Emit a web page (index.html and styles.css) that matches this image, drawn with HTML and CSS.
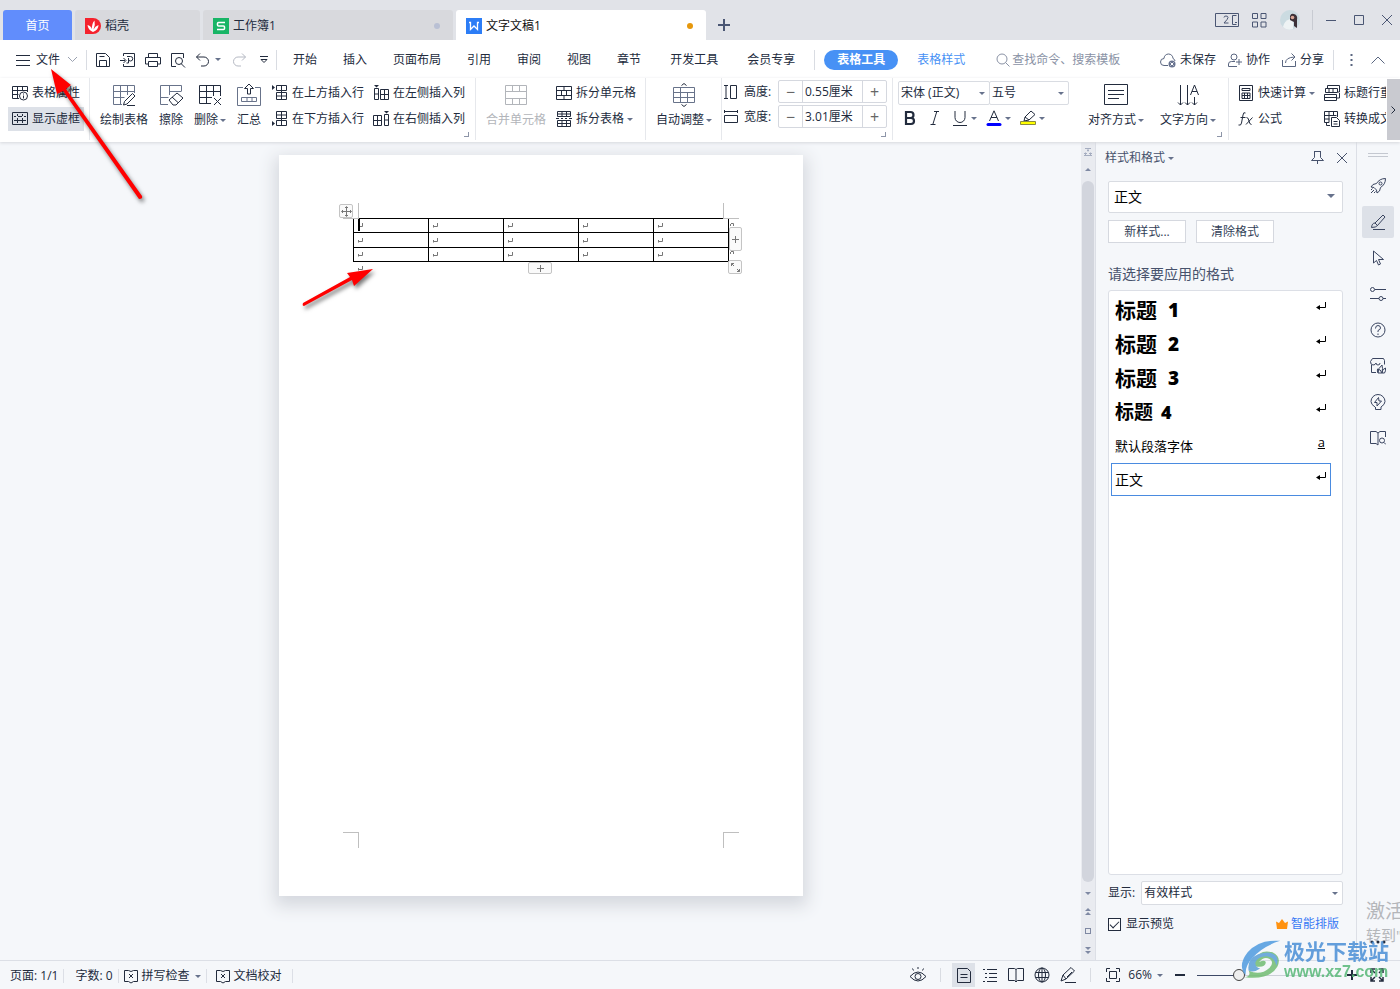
FILE: index.html
```html
<!DOCTYPE html>
<html lang="zh-CN">
<head>
<meta charset="utf-8">
<title>文字文稿1</title>
<link rel="stylesheet" href="styles.css">
</head>
<body>
<svg class="defs" aria-hidden="true">
  <symbol id="mark" viewBox="0 0 5 5"><path d="M4.500 0v3.500H.5M.5 2v2.500"/></symbol>
  <symbol id="ret" viewBox="0 0 10 8"><path d="M9.500 0v5.500H2"/><path d="M0 5.500l4-2.500v5z" fill="#000" stroke="none"/></symbol>
  <symbol id="book" viewBox="0 0 16 16"><path d="M1.500 2.500h4l2.500 1 2.500-1h4v11h-4L8 15l-2.500-1.500h-4zM6 6l4 4M10 6l-4 4"/></symbol>
  <symbol id="close" viewBox="0 0 12 12"><path d="M1 1l10 10M11 1L1 11"/></symbol>
</svg>

<header class="titlebar">
  <nav class="doc-tabs">
    <button class="doc-tab home">首页</button>
    <button class="doc-tab shell"><svg class="logo" viewBox="0 0 16 16"><path d="M0 0h8a8 8 0 0 1 0 16H0z" fill="#f5222d"/><path d="M8 14Q3 12 2.500 7q3 .5 4.500 4Q6.500 6 9.500 2.500q1 4-1 9Q10 8 13.500 7q0 5-5.500 7z" fill="#fff"/></svg>稻壳</button>
    <button class="doc-tab book"><svg class="logo" viewBox="0 0 16 16"><rect width="16" height="16" fill="#18b566"/><path d="M12 4.500H5.500a1 1 0 0 0-1 1V7a1 1 0 0 0 1 1h5a1 1 0 0 1 1 1v1.500a1 1 0 0 1-1 1H4" fill="none" stroke="#fff" stroke-width="1.500"/></svg>工作簿1<i class="dot"></i></button>
    <button class="doc-tab current"><svg class="logo" viewBox="0 0 16 16"><rect width="16" height="16" fill="#2c7df6"/><path d="M3 4.500h1.500v7L8 8l3.500 3.500v-7H13" fill="none" stroke="#fff" stroke-width="1.300"/></svg>文字文稿1<i class="dot unsaved"></i></button>
    <button class="add-tab" aria-label="新建"><svg width="12" height="12" viewBox="0 0 12 12"><path d="M6 0v12M0 6h12" stroke="#4a5673" stroke-width="2"/></svg></button>
  </nav>
  <div class="window-tools">
    <button aria-label="窗口"><svg width="24" height="14" viewBox="0 0 24 14"><path d="M.5.5h23v13H.5zM21.500 2.500h-4v9h4M20 9.500h2M9 4.500q0-1.500 2-1.500t2 1.500q0 1.500-4 5.500h4.500"/></svg></button>
    <button aria-label="应用"><svg width="15" height="15" viewBox="0 0 15 15"><path d="M.5.5h5v5h-5zM9 .5h5v5H9zM.5 9h5v5h-5zM9 9h5v5H9z"/></svg></button>
    <button class="avatar" aria-label="账户"><svg width="20" height="20" viewBox="0 0 20 20"><circle cx="10" cy="10" r="10" fill="#cbdbe1" stroke="none"/><path d="M3 17q1-6 7-8l3 3v7q-6 2-10-2z" fill="#eef3f4" stroke="none"/><path d="M10 6q1-3 4-2 4 1 3 6l0 8-3-2 0-4-4-2z" fill="#3c3138" stroke="none"/><circle cx="12.500" cy="7.500" r="1.800" fill="#d9a797" stroke="none"/></svg></button>
    <i class="divider"></i>
    <button aria-label="最小化"><svg width="12" height="12" viewBox="0 0 12 12"><path d="M1 6.500h10"/></svg></button>
    <button aria-label="最大化"><svg width="12" height="12" viewBox="0 0 12 12"><path d="M1.500 1.500h9v9h-9z"/></svg></button>
    <button aria-label="关闭"><svg width="12" height="12"><use href="#close"/></svg></button>
  </div>
</header>

<div class="menubar">
  <button class="file"><svg width="16" height="12" viewBox="0 0 16 12"><path d="M1 1.500h14M1 6.500h14M1 11.500h14"/></svg>文件<svg class="chev" width="11" height="7" viewBox="0 0 11 7"><path d="M1 1l4.500 4.500L10 1"/></svg></button>
  <i class="divider"></i>
  <div class="quick">
    <button aria-label="保存"><svg width="16" height="16" viewBox="0 0 16 16"><path d="M1.500 1.500h9l4 4v9h-13zM4.500 14V8.500h7V14M4.500 4.500h5"/></svg></button>
    <button aria-label="输出为PDF"><svg width="16" height="16" viewBox="0 0 16 16"><path d="M3.500 4V1.500h11v13h-11V12M0 8.500h5M3.500 6l2.500 2.500L3.500 11M7 4.500h3.500a2 2 0 0 1 0 4.500Q8 9 8.500 7M8.500 6v5h-2"/></svg></button>
    <button aria-label="打印"><svg width="16" height="16" viewBox="0 0 16 16"><path d="M3.500 5V1.500h9V5M3.500 12h-3V5.500h15V12h-3M3.500 9.500h9v5h-9z"/></svg></button>
    <button aria-label="打印预览"><svg width="16" height="16" viewBox="0 0 16 16"><path d="M6 14.500H1.500v-13h12V6M11 11.500l4 4"/><circle cx="9" cy="9" r="3.500"/></svg></button>
    <button class="undo" aria-label="撤销"><svg width="16" height="16" viewBox="0 0 16 16"><path d="M5 1.500L1.500 5 5 8.500M1.500 5H9a4.500 4.500 0 0 1 0 9H6"/></svg><i class="caret"></i></button>
    <button class="faded" aria-label="恢复"><svg width="16" height="16" viewBox="0 0 16 16"><path d="M11 1.500L14.500 5 11 8.500M14.500 5H7a4.500 4.500 0 0 0 0 9h3"/></svg></button>
    <button aria-label="更多"><svg width="8" height="8" viewBox="0 0 8 8"><path d="M0 .5h8M1 3.500h6L4 6.500z"/></svg></button>
  </div>
  <i class="divider"></i>
  <nav class="menus">
    <button>开始</button><button>插入</button><button>页面布局</button><button>引用</button><button>审阅</button><button>视图</button><button>章节</button><button class="wide">开发工具</button><button class="wide">会员专享</button>
  </nav>
  <i class="divider"></i>
  <button class="pill">表格工具</button>
  <button class="table-style">表格样式</button>
  <label class="search"><svg width="14" height="14" viewBox="0 0 14 14"><circle cx="6" cy="6" r="5"/><path d="M9.500 9.500l4 4"/></svg><input type="text" placeholder="查找命令、搜索模板" aria-label="搜索"></label>
  <div class="share">
    <button><svg width="16" height="16" viewBox="0 0 16 16"><path d="M8 13.500H4a3.500 3.500 0 0 1 0-7 4.500 4.500 0 0 1 9 0q2 1 2 2.500"/><circle cx="12" cy="12" r="3.500" fill="#68738f" stroke="none"/><path d="M10.500 10.500l3 3M13.500 10.500l-3 3" stroke="#fff"/></svg>未保存</button>
    <button><svg width="14" height="14" viewBox="0 0 14 14"><circle cx="6" cy="4" r="3"/><path d="M9 13.500H.5V11q0-2.500 3-2.500H7M11 6v6M8 9h6"/></svg>协作</button>
    <button><svg width="14" height="14" viewBox="0 0 14 14"><path d="M.5 7v6.500h13V8M3.500 10q0-5.500 9-6M9.500.500L13 4 9.500 7.500"/></svg>分享</button>
    <i class="divider"></i>
    <button aria-label="更多"><svg width="3" height="14" viewBox="0 0 3 14"><path d="M.5 2h2M.5 7h2M.5 12h2" stroke-width="2"/></svg></button>
    <button aria-label="收起"><svg width="14" height="8" viewBox="0 0 14 8"><path d="M.5 7.500L7 1l6.500 6.500"/></svg></button>
  </div>
</div>

<div class="ribbon">
  <section class="group props">
    <div class="stack">
      <button><svg width="16" height="16" viewBox="0 0 16 16"><path d="M7 13.500H.5v-12h15V7M.5 5.500h15M.5 9.500h6M5.500 1.500v12M10.500 1.500V6"/><circle cx="11.500" cy="11" r="4" fill="#fff"/><path d="M11.500 10.500v3M11.500 8.500v1"/></svg>表格属性</button>
      <button class="on"><svg width="16" height="16" viewBox="0 0 16 16"><path d="M.5 1.500h15v12H.5zM2 5.500h2M6 5.500h4M12 5.500h2M2 9.500h12M5.500 3v2M5.500 7v5M10.500 3v2M10.500 7v5"/></svg>显示虚框</button>
    </div>
  </section>
  <section class="group edit">
    <button class="big"><svg width="24" height="24" viewBox="0 0 24 24"><path d="M10 21.500H1.500v-19h21V10M1.500 8.500h21M1.500 14.500h11M8.500 2.500v19M15.500 2.500V12" stroke="#68738a"/><path d="M12.500 18.500l8-8 2.500 2.500-8 8-3.500 1zM15 22.500h8" fill="#fff"/></svg>绘制表格</button>
    <button class="big"><svg width="24" height="24" viewBox="0 0 24 24"><path d="M9 21.500H1.500v-19h21V8M1.500 14.500h8M10.500 2.500V12M10.500 8.500h12" stroke="#68738a"/><path d="M10 17l8-7 6 5-7 7h-3zM13 14l6 5.500" fill="#fff"/></svg>擦除</button>
    <button class="big"><svg width="24" height="24" viewBox="0 0 24 24"><path d="M13 20.500H1.500v-18h21V13M1.500 8.500h21M1.500 14.500H14M8.500 2.500v18M15.500 2.500V13M16 15l7 7M23 15l-7 7"/></svg><span>删除<i class="caret"></i></span></button>
    <button class="big"><svg width="24" height="24" viewBox="0 0 24 24"><path d="M6 4.500H.5v18h23v-18H18M4.500 14.500h15v4h-15zM10 14.500v4M15 14.500v4" stroke="#68738a"/><path d="M12 1l-4.500 4.500h3V11h3V5.500h3z" fill="#fff"/></svg>汇总</button>
    <div class="stack">
      <button><svg width="16" height="16" viewBox="0 0 16 16"><path d="M4.500.5h10v5h-10zM9.500 0v15M4.500 7.500h10v7h-10zM4.500 11h10"/><path d="M0 0l3 2.500L0 5z" fill="#222b3d" stroke="none"/></svg>在上方插入行</button>
      <button><svg width="16" height="16" viewBox="0 0 16 16"><path d="M4.500.5h10v7h-10zM9.500 0v15M4.500 4h10M4.500 9.500h10v5h-10z"/><path d="M0 10l3 2.500L0 15z" fill="#222b3d" stroke="none"/></svg>在下方插入行</button>
    </div>
    <div class="stack">
      <button><svg width="16" height="16" viewBox="0 0 16 16"><path d="M1.500 3.500h4v11h-4zM1.500 9h4M7.500 4.500h8v10h-8zM7.500 9.500h8M11.500 4.500v10"/><path d="M1 0h5L3.500 2.500z" fill="#222b3d" stroke="none"/></svg>在左侧插入列</button>
      <button><svg width="16" height="16" viewBox="0 0 16 16"><path d="M11.500 3.500h4v11h-4zM11.500 9h4M.5 4.500h8v10h-8zM.5 9.500h8M4.500 4.500v10"/><path d="M11 0h5l-2.500 2.500z" fill="#222b3d" stroke="none"/></svg>在右侧插入列</button>
    </div>
    <i class="corner"></i>
  </section>
  <section class="group merge">
    <button class="big disabled" disabled><svg width="24" height="24" viewBox="0 0 24 24"><path d="M1.500 2.500h21v19h-21zM1.500 8.500h21v7h-21zM8.500 2.500v6M15.500 2.500v6M8.500 15.500v6M15.500 15.500v6"/></svg>合并单元格</button>
    <div class="stack">
      <button><svg width="16" height="16" viewBox="0 0 16 16"><path d="M.5 1.500h15v13H.5zM.5 5.500h15M.5 10.500h15M5.500 5.500v5M10.500 5.500v5M8 1.500v4M8 10.500v4"/></svg>拆分单元格</button>
      <button><svg width="16" height="16" viewBox="0 0 16 16"><path d="M1.500 5.500v-5h13v5zM1.500 3h13M6 .5v5M10.500.5v5M0 7.500h3M5 7.500h2M9 7.500h2M13 7.500h3M1.500 9.500h13v6h-13zM1.500 12.500h13M6 9.500v6M10.500 9.500v6"/></svg>拆分表格<i class="caret"></i></button>
    </div>
  </section>
  <section class="group adjust">
    <button class="big"><svg width="24" height="24" viewBox="0 0 24 24"><path d="M1.500 4.500h21v15h-21zM1.500 9.500h21M1.500 14.500h21M8.500 4.500v15M15.500 9.500v10" stroke="#68738a"/><path d="M9.500 2.500L12 .5l2.500 2M9.500 21.500l2.500 2 2.500-2"/></svg><span>自动调整<i class="caret"></i></span></button>
  </section>
  <section class="group size">
    <div class="size-row"><svg width="14" height="14" viewBox="0 0 14 14"><path d="M0 .5h4M2 .5v13M0 13.500h4M6.500.5h6v13h-6z"/></svg><label for="h">高度:</label><div class="spin"><button aria-label="减小">−</button><input id="h" type="text" value="0.55厘米"><button aria-label="增大">+</button></div></div>
    <div class="size-row"><svg width="14" height="14" viewBox="0 0 14 14"><path d="M.5 0v3M.5 1.500h13M13.500 0v3M.5 5.500h13v7H.5z"/></svg><label for="w">宽度:</label><div class="spin"><button aria-label="减小">−</button><input id="w" type="text" value="3.01厘米"><button aria-label="增大">+</button></div></div>
    <i class="corner"></i>
  </section>
  <section class="group font">
    <div class="font-col">
      <div class="selects">
        <div class="select face"><select aria-label="字体"><option>宋体 (正文)</option></select><i class="caret"></i></div>
        <div class="select points"><select aria-label="字号"><option>五号</option></select><i class="caret"></i></div>
      </div>
      <div class="formats">
        <button aria-label="加粗"><svg width="16" height="16" viewBox="0 0 16 16"><path d="M4 2h4.500a3 3 0 0 1 0 6H4zM4 8h5a3 3 0 0 1 0 6H4z" stroke-width="2.200"/></svg></button>
        <button aria-label="倾斜"><svg width="16" height="16" viewBox="0 0 16 16"><path d="M7 1.500h5M3.500 14.500h5M9.800 1.500l-4 13"/></svg></button>
        <button aria-label="下划线"><svg width="16" height="16" viewBox="0 0 16 16"><path d="M3 1v6.500a5 5 0 0 0 10 0V1M1 15.500h14"/></svg><i class="caret"></i></button>
        <button aria-label="字体颜色"><svg width="16" height="16" viewBox="0 0 16 16"><path d="M3.500 11L8 .800 12.500 11M5 7.500h6"/><path d="M2 14.500h12" stroke="#00f" stroke-width="3" stroke-linecap="round"/></svg><i class="caret"></i></button>
        <button aria-label="突出显示"><svg width="16" height="16" viewBox="0 0 16 16"><path d="M4 11l1-4 6-6L15 4.500 9 10zM5 7l4 3"/><path d="M.5 11.500h15v3H.5z" fill="#ff0" stroke="#8a8a42"/></svg><i class="caret"></i></button>
      </div>
    </div>
    <button class="big"><svg width="24" height="24" viewBox="0 0 24 24"><path d="M.5 1.500h23v20H.5zM4 7.500h16M4 11.500h16M4 15.500h11"/></svg><span>对齐方式<i class="caret"></i></span></button>
    <button class="big"><svg width="24" height="24" viewBox="0 0 24 24"><path d="M4.500 2v20M2 19.500l2.500 2.500L7 19.500M11.500 2v20M9 19.500l2.500 2.500 2.500-2.500M18.500 14v8M16 19.500l2.500 2.500 2.500-2.500M14.500 12l4-10 4 10M16 8.500h5"/></svg><span>文字方向<i class="caret"></i></span></button>
    <i class="corner"></i>
  </section>
  <section class="group calc">
    <div class="stack">
      <button><svg width="16" height="16" viewBox="0 0 16 16"><path d="M1.500.5h13v15h-13zM4 3.500h8v2H4zM4 8h8v5.500H4zM4 10.500h8M6.500 8v5.500M9.500 8v5.500"/></svg>快速计算<i class="caret"></i></button>
      <button><svg width="16" height="16" viewBox="0 0 16 16"><path d="M7.500 2Q5.500.500 5 4L3.500 12q-.5 3-3 2M2.500 6.500h5M8.500 6.500q2 0 2.500 3.500t2.500 3.500M14.500 6.500L8 13.500"/></svg>公式</button>
    </div>
    <div class="stack clipped">
      <button><svg width="16" height="16" viewBox="0 0 16 16"><path d="M3.500 3V.5h12V7H14M1.500 3.500h12v4h-12zM5 3.500v4M9 3.500v4M13 13h2.500V8M.5 9.500h12v6H.5zM.5 12.500h12"/></svg>标题行重复</button>
      <button><svg width="16" height="16" viewBox="0 0 16 16"><path d="M5 11.500H.5v-11h13V6M.5 4.500h12M.5 8h5M5 .5v11M9.500.5v4M7.500 6.500h5l3 3v6h-8zM9.500 10.500h4M9.500 13h4M2.500 12v2.500H6"/></svg>转换成文本</button>
    </div>
  </section>
  <button class="ribbon-next" aria-label="下一页"><svg width="5" height="8" viewBox="0 0 5 8"><path d="M.5.5L4 4 .5 7.500"/></svg></button>
</div>

<main class="workspace">
  <div class="canvas">
    <article class="page">
      <table class="grid">
        <tr><td class="caret-cell"><svg><use href="#mark"/></svg></td><td><svg><use href="#mark"/></svg></td><td><svg><use href="#mark"/></svg></td><td><svg><use href="#mark"/></svg></td><td><svg><use href="#mark"/></svg></td></tr>
        <tr><td><svg><use href="#mark"/></svg></td><td><svg><use href="#mark"/></svg></td><td><svg><use href="#mark"/></svg></td><td><svg><use href="#mark"/></svg></td><td><svg><use href="#mark"/></svg></td></tr>
        <tr><td><svg><use href="#mark"/></svg></td><td><svg><use href="#mark"/></svg></td><td><svg><use href="#mark"/></svg></td><td><svg><use href="#mark"/></svg></td><td><svg><use href="#mark"/></svg></td></tr>
      </table>
      <svg class="end-mark"><use href="#mark"/></svg>
      <svg class="row-ends" width="5" height="36" viewBox="0 0 5 36"><path d="M1 1.500h2.500V4M.5 2v2M1 29.500h2.500V32M.5 30v2"/></svg>
      <i class="crop tl"></i><i class="crop tr"></i><i class="crop bl"></i><i class="crop br"></i>
      <button class="handle move" aria-label="移动表格"><svg width="11" height="11" viewBox="0 0 11 11"><path d="M5.500 1v9M1 5.500h9M4 2l1.500-1.500L7 2M4 9l1.500 1.500L7 9M2 4L.5 5.500 2 7M9 4l1.500 1.500L9 7"/></svg></button>
      <button class="handle add-row" aria-label="添加行"><svg width="7" height="7" viewBox="0 0 7 7"><path d="M3.500 0v7M0 3.500h7"/></svg></button>
      <button class="handle add-col" aria-label="添加列"><svg width="7" height="7" viewBox="0 0 7 7"><path d="M3.500 0v7M0 3.500h7"/></svg></button>
      <button class="handle resize" aria-label="调整大小"><svg width="9" height="9" viewBox="0 0 9 9"><path d="M.5 3V.5H3M.5.500L3 3M8.500 6v2.500H6M6 6l2.500 2.500"/></svg></button>
    </article>
  </div>
  <div class="scroll">
    <svg class="split" width="8" height="8" viewBox="0 0 8 8"><path d="M0 7.500h8M1.500 4.500v3M6.500 4.500v3M0 5.500h3M5 5.500h3M1 .5h6M3 2.500h2M4 .5v3"/></svg>
    <i class="tri up"></i>
    <div class="thumb"></div>
    <div class="scroll-nav"><i class="tri down"></i><span><i class="tri up"></i><i class="tri up"></i></span><i class="square"></i><span><i class="tri down"></i><i class="tri down"></i></span></div>
  </div>
  <aside class="panel">
    <header class="panel-head"><button>样式和格式<i class="caret"></i></button><span><button aria-label="固定"><svg width="13" height="14" viewBox="0 0 13 14"><path d="M3 .5h7M3.500.5v6L.5 9.500h12l-3-3v-6M6.500 9.500V13"/></svg></button><button aria-label="关闭"><svg width="12" height="12"><use href="#close"/></svg></button></span></header>
    <div class="select style-select"><select aria-label="样式"><option>正文</option></select><i class="caret large"></i></div>
    <div class="style-buttons"><button>新样式...</button><button>清除格式</button></div>
    <h2 id="styles-title">请选择要应用的格式</h2>
    <ul class="styles" aria-labelledby="styles-title">
      <li class="h1">标题<b>1</b><svg><use href="#ret"/></svg></li>
      <li class="h1">标题<b>2</b><svg><use href="#ret"/></svg></li>
      <li class="h1">标题<b>3</b><svg><use href="#ret"/></svg></li>
      <li class="h4">标题<b>4</b><svg><use href="#ret"/></svg></li>
      <li class="char">默认段落字体<u>a</u></li>
      <li class="chosen">正文<svg><use href="#ret"/></svg></li>
    </ul>
    <div class="show-row"><label for="show">显示:</label><div class="select"><select id="show"><option>有效样式</option></select><i class="caret"></i></div></div>
    <div class="preview-row"><label><input type="checkbox" checked>显示预览</label><a href="#"><svg width="12" height="10" viewBox="0 0 12 10"><path d="M1 10L0 2.500l3 1.500 3-4 3 4 3-1.500L11 10z" fill="#ff9210"/></svg>智能排版</a></div>
  </aside>
  <nav class="rail">
    <i class="grip"></i>
    <button aria-label="快捷"><svg viewBox="0 0 16 16"><path d="M15.500.5q-6 0-9 5L3 6.500 1 9l3 .5 2.500 2.500.5 3 2.500-2 1-3.500q5-3 5-9zM1 15l3-3M1 12l1.500-1.500M4 15l1.500-1.500"/><circle cx="10.500" cy="5.500" r="1.500"/></svg></button>
    <button class="on" aria-label="样式"><svg viewBox="0 0 16 16"><path d="M5 9l8-8 2 2-7.500 8.500M5 9q-3 0-3.500 4.500 4.500 0 6-2zM3 15.500h12M5 9l2.500 2.500"/></svg></button>
    <button aria-label="选择"><svg viewBox="0 0 16 16"><path d="M3.500 1v12l3-2.500 2 4.500 2-1-2-4.500h5z"/></svg></button>
    <button aria-label="属性"><svg viewBox="0 0 16 16"><circle cx="2.500" cy="3.500" r="2"/><path d="M5 3.500h11M0 12.500h9M13 12.500h3"/><circle cx="11" cy="12.500" r="2"/></svg></button>
    <button aria-label="帮助"><svg viewBox="0 0 16 16"><circle cx="8" cy="8" r="7"/><path d="M5.500 6.500q0-3 2.500-3t2.500 2.500Q10.500 7.500 8 8.500V10M8 11.500v1.500"/></svg></button>
    <button aria-label="素材"><svg viewBox="0 0 16 16"><path d="M1.500 7v7.500H6M14.500 6.500v-4l-1-2h-11l-2 3q0 3.500 2.500 3.500T6 5q0 2 2 2t2-2M8 15q0-5 4-8 1 3 0 8M8 15q-1-2-.5-4 3 0 4.500 4 0-4 3.500-5 .5 3-1 5z"/></svg></button>
    <button aria-label="智能"><svg viewBox="0 0 16 16"><path d="M5 13Q1 10.500 1 7.500a7 7 0 0 1 14 0Q15 10.500 11 13v2.500H5.500V13M8.500 3.500l-4 5H7V12l4.500-5H9z"/></svg></button>
    <button aria-label="查阅"><svg viewBox="0 0 16 16"><path d="M8 3v12M8 3L6 1.500H.5v12H6L8 15M8 3l2-1.500h5.500V7"/><circle cx="12" cy="10.500" r="2.500"/><path d="M14 12.500l2 2"/></svg></button>
  </nav>
</main>

<footer class="status">
  <div class="status-left">
    <span>页面: 1/1</span><span>字数: 0</span>
    <button><svg width="16" height="16"><use href="#book"/></svg>拼写检查<i class="caret"></i></button>
    <button class="proof"><svg width="16" height="16"><use href="#book"/></svg>文档校对</button>
  </div>
  <div class="status-right">
    <div class="views">
      <button aria-label="护眼模式"><svg viewBox="0 0 16 16"><path d="M0 9.500q8-9 16 0-8 9-16 0zM8 0v2M2.500 1.500l1 2M13.500 1.500l-1 2"/><circle cx="8" cy="9.500" r="3"/></svg></button>
      <i class="divider"></i>
      <button class="on" aria-label="页面视图"><svg viewBox="0 0 16 16"><path d="M1.500 1.500h10l3 3v11h-13zM4.500 7.500h7M4.500 10.500h7"/></svg></button>
      <button aria-label="大纲"><svg viewBox="0 0 16 16"><path d="M1 2.500h2M5 2.500h10M3 6.500h2M7 6.500h8M3 10.500h2M7 10.500h8M1 14.500h2M5 14.500h10"/></svg></button>
      <button aria-label="阅读版式"><svg viewBox="0 0 16 16"><path d="M8 2.500v12M8 2.500L6.500 1.500h-6v12h6L8 15l1.500-1.500h6v-12h-6z"/></svg></button>
      <button aria-label="Web版式"><svg viewBox="0 0 16 16"><circle cx="8" cy="8" r="7"/><ellipse cx="8" cy="8" rx="3.500" ry="7"/><path d="M8 1v14M1.500 5.500h13M1.500 10.500h13"/></svg></button>
      <button aria-label="写作模式"><svg viewBox="0 0 16 16"><path d="M1 14l2-6 8-7.500L14.500 4 6 12zM3 8l3 4M5 15.500h11M7 10l5-5"/></svg></button>
      <i class="divider"></i>
    </div>
    <button aria-label="适合页面"><svg width="14" height="14" viewBox="0 0 14 14"><path d="M.5 4V.5H4M10 .5h3.500V4M13.500 10v3.500H10M4 13.500H.5V10M3.500 3.500h7v7h-7z"/></svg></button>
    <button class="percent">66%<i class="caret"></i></button>
    <button class="minus" aria-label="缩小"><svg width="10" height="10" viewBox="0 0 10 10"><path d="M0 5h10" stroke-width="2"/></svg></button>
    <input class="zoom" type="range" min="0" max="100" value="28" aria-label="缩放">
    <button class="plus" aria-label="放大"><svg width="10" height="10" viewBox="0 0 10 10"><path d="M0 5h10M5 0v10" stroke-width="2"/></svg></button>
    <button aria-label="全屏"><svg width="14" height="14" viewBox="0 0 14 14"><path d="M1 5V1h4M9 1h4v4M13 9v4H9M5 13H1V9M1 1l4 4M13 1L9 5M13 13L9 9M1 13l4-4" stroke-width="1.500"/></svg></button>
  </div>
</footer>

<div class="activate">激活<small>转到"</small></div>
<svg class="more-dots" width="16" height="4" viewBox="0 0 16 4"><circle cx="2" cy="2" r="1.500"/><circle cx="8" cy="2" r="1.500"/><circle cx="14" cy="2" r="1.500"/></svg>
<div class="site-mark">
  <svg width="44" height="42" viewBox="0 0 46 42"><path d="M42 1Q20-1 8 13-3 27 6 37q-1-10 7-18Q23 7 42 1z" fill="#4f9be0"/><path d="M9 32q12 6 22-3 5-6 0-9-6-3-11 3 7-3 7 1-1 5-9 4-6-1-3-7Q21 9 34 13q10 5 5 15Q31 42 5 39q7-1 4-7z" fill="#72bd72"/><path d="M9 32q-2-12 10-17 12-4 18 1 4 4 1 11-2-9-10-10-10 0-12 7 0 5 5 6-7 5-12 2z" fill="#5a9fd7"/></svg>
  <div><strong>极光下载站</strong><em>www.xz7.com</em></div>
</div>
<svg class="pointer first" width="110" height="150" viewBox="0 0 110 150"><path d="M11 11l20 16-5 4 76 107q1 3-3 3L23 33l-6 3z"/></svg>
<svg class="pointer second" width="90" height="56" viewBox="0 0 90 56"><path d="M82 9L63 26l-2-6L13 46q-2 0-1-3l47-26-3-4z"/></svg>
</body>
</html>
```
FILE: styles.css
```css
* { box-sizing: border-box; }
body {
  margin: 0; height: 100vh; display: flex; flex-direction: column; overflow: hidden; position: relative;
  font: 12px/16px "Open Sans", "Noto Sans CJK SC", sans-serif; color: #222b3d; background: #f5f7fa;
}
button, input, select { font: inherit; color: inherit; }
button { border: 0; background: none; padding: 0; display: flex; align-items: center; white-space: nowrap; }
svg { flex: none; fill: none; stroke: currentColor; }
.logo, .panel a svg, .site-mark svg { stroke: none; }
.defs { position: absolute; width: 0; height: 0; }
.divider { width: 1px; height: 20px; background: #d9dce2; flex: none; }
.caret { border: 3px solid transparent; border-top-color: #67728c; border-bottom: 0; margin-left: 3px; flex: none; display: inline-block; vertical-align: middle; }
.caret.large { border-width: 4px; border-bottom: 0; }

/* Title bar */
.titlebar { height: 40px; background: #e1e3e8; display: flex; justify-content: space-between; flex: none; }
.doc-tabs { display: flex; align-items: flex-end; gap: 3px; padding-left: 3px; }
.doc-tab { height: 30px; padding: 2px 10px 0; gap: 4px; background: #d8d9dd; border-radius: 3px 3px 0 0; }
.doc-tab.home { width: 69px; background: #618dfc; color: #fff; justify-content: center; }
.doc-tab.shell { width: 125px; }
.doc-tab.book, .doc-tab.current { width: 250px; }
.doc-tab.current { background: #fff; color: #111; }
.logo { width: 16px; height: 16px; }
.dot { width: 6px; height: 6px; border-radius: 50%; background: #b9c0d4; margin-left: auto; margin-right: 3px; }
.dot.unsaved { background: #e6970c; }
.add-tab { height: 30px; padding: 0 9px; }
.window-tools { display: flex; align-items: center; gap: 12px; padding-right: 7px; color: #4a5673; }
.window-tools .divider { background: #c8cbd2; margin-right: -1px; }
.window-tools > button ~ button { margin-left: 1px; }
.window-tools > .divider ~ button ~ button { margin-left: 4px; }

/* Menu bar */
.menubar { height: 38px; background: #fff; display: flex; align-items: center; flex: none; padding: 1px 15px 0; }
.file { gap: 5px; margin-right: 8px; }
.chev { color: #9aa1b0; margin-left: 2px; }
.quick { display: flex; align-items: center; gap: 9px; padding: 0 8px; width: 189px; }
.quick button:last-child { margin-left: 4px; }
.undo .caret { margin-left: 4px; }
.undo { margin-right: 1px; }
.faded { color: #b5b9c3; }
.menus { display: flex; gap: 26px; padding: 0 19px 0 16px; }
.menus .wide { margin-left: 3px; }
.pill { background: #4791f5; color: #fff; font-weight: bold; height: 20px; border-radius: 10px; padding: 0 13px; margin-left: 9px; }
.table-style { color: #4791f5; margin-left: 19px; }
.search { display: flex; align-items: center; gap: 2px; margin-left: 31px; color: #8a92a5; }
.search input { width: 120px; border: 0; padding: 0; background: none; }
.search input::placeholder { color: #8a92a5; opacity: 1; }
.share { display: flex; align-items: center; gap: 12px; margin-left: auto; }
.share button { gap: 4px; }
.share svg { color: #5a6680; }
.share .divider { margin-left: -3px; margin-right: 4px; }
.share button:last-child { margin-left: 6px; }

/* Ribbon */
.ribbon { height: 64px; background: #fff; display: flex; flex: none; overflow: hidden; position: relative; z-index: 1; box-shadow: 0 1px 3px #d5d7dc; }
.group { position: relative; display: flex; flex: none; align-items: flex-start; padding-top: 3px; }
.group + .group::before { content: ""; position: absolute; left: 0; top: 0; height: 62px; width: 1px; background: #e6e8ec; }
.stack { display: flex; flex-direction: column; gap: 2px; }
.stack button { height: 24px; gap: 4px; }
.stack .caret { margin-left: -1px; }
.big { flex-direction: column; gap: 4px; padding-top: 2px; line-height: 18px; flex: none; }
.big .caret { margin-left: 2px; }
.disabled { color: #b2b5ba; }
.corner { position: absolute; right: 6px; bottom: 5px; width: 5px; height: 5px; border: solid #8d95a8; border-width: 0 1px 1px 0; }
.props { padding-left: 8px; width: 89px; }
.props button { padding: 0 4px; }
.on { background: #dde1e8; }
.edit { padding-left: 11px; width: 386px; gap: 11px; }
.edit .stack + .stack { margin-left: -2px; }
.merge { padding-left: 11px; width: 170px; gap: 10px; }
.adjust { padding-left: 11px; width: 76px; }
.size { flex-direction: column; gap: 2px; padding-top: 2px; padding-left: 3px; width: 171px; }
.size-row { display: flex; align-items: center; }
.size-row label { margin-left: 6px; width: 34px; }
.spin { display: flex; width: 109px; height: 23px; border: 1px solid #d5d8df; border-radius: 2px; }
.spin button { width: 23px; justify-content: center; font-size: 16px; color: #666; flex: none; }
.spin input { width: 100%; min-width: 0; border: solid #d5d8df; border-width: 0 1px; padding: 0 2px; }
.font { padding-left: 6px; width: 336px; gap: 19px; }
.font .big + .big { margin-left: -3px; }
.font-col { display: flex; flex-direction: column; gap: 5px; }
.selects { display: flex; }
.select { position: relative; display: flex; background: #fff; border: 1px solid #d9dce2; border-radius: 2px; height: 24px; }
.select select { appearance: none; border: 0; background: none; width: 100%; padding: 0 2px; outline: 0; }
.select .caret { position: absolute; right: 4px; top: 50%; margin-top: -1px; pointer-events: none; }
.face { width: 92px; }
.points { width: 80px; margin-left: -1px; }
.formats { display: flex; gap: 9px; padding-left: 4px; }
.calc { padding-left: 10px; gap: 9px; }
.clipped { width: 62px; overflow: hidden; }
.ribbon-next { position: absolute; right: 0; top: 1px; width: 13px; height: 61px; background: #c9cad0; justify-content: center; }

/* Document area */
.workspace { flex: 1; display: flex; min-height: 0; }
.canvas { flex: 1; min-width: 0; overflow: hidden; padding: 13px 0 0 1px; display: flex; justify-content: center; align-items: flex-start; }
.page { position: relative; width: 524px; aspect-ratio: 524 / 741; background: #fff; padding: 63px 74px; box-shadow: 0 6px 16px 4px #d5d8de; }
.grid { border-collapse: collapse; table-layout: fixed; width: 376px; }
.grid td { border: 1px solid #000; height: 14px; padding: 0 0 0 4px; line-height: 0; position: relative; }
.grid tr:nth-child(2) td { height: 15px; }
.grid svg, .end-mark { width: 5px; height: 5px; color: #777; }
.end-mark { display: block; margin: 4px 0 0 5px; }
.row-ends { position: absolute; left: 451px; top: 67px; color: #777; }
.caret-cell::before { content: ""; position: absolute; left: 4px; top: 0; width: 2px; height: 12px; background: #000; }
.crop { position: absolute; width: 16px; height: 16px; border: 0 solid #bfbfbf; }
.tl { left: 64px; top: 48px; border-width: 0 1px 1px 0; }
.tr { right: 64px; top: 48px; border-width: 0 0 1px 1px; }
.bl { left: 64px; bottom: 48px; border-width: 1px 1px 0 0; }
.br { right: 64px; bottom: 48px; border-width: 1px 0 0 1px; }
.handle { position: absolute; background: #fafafa; border: 1px solid #c4c4c4; border-radius: 2px; color: #777; justify-content: center; width: 14px; height: 14px; }
.move { left: 60px; top: 49px; }
.add-row { left: 249px; top: 107px; width: 24px; height: 12px; }
.add-col { left: 450px; top: 72px; width: 13px; height: 24px; }
.resize { left: 449px; top: 105px; }

/* Scroll bar */
.scroll { width: 15px; background: #e9ebf0; display: flex; flex-direction: column; align-items: center; border-right: 1px solid #dcdfe6; padding: 6px 0; gap: 10px; color: #a5adc0; }
.tri { border: 3px solid transparent; display: block; }
.tri.up { border-bottom-color: #7f89a3; border-top: 0; }
.tri.down { border-top-color: #7f89a3; border-bottom: 0; }
.scroll > .tri { margin-top: 2px; }
.thumb { flex: 1; width: 12px; border-radius: 6px; background: #d2d5dd; }
.scroll-nav { display: flex; flex-direction: column; align-items: center; gap: 13px; }
.scroll-nav span { display: grid; gap: 1px; }
.square { width: 6px; height: 6px; border: 1px solid #7f89a3; }

/* Style panel */
.panel { width: 261px; padding: 0 13px 28px 12px; display: flex; flex-direction: column; border-right: 1px solid #dcdfe6; }
.panel-head { display: flex; justify-content: space-between; align-items: center; height: 32px; margin-left: -3px; margin-right: -5px; color: #47526c; }
.panel-head span { display: flex; gap: 12px; }
.style-select { height: 32px; margin-top: 7px; font-size: 14px; color: #000; }
.style-select select { padding-left: 5px; }
.style-select .caret { right: 7px; margin-top: -3px; }
.style-buttons { display: flex; gap: 10px; margin-top: 7px; color: #333f58; }
.style-buttons button { width: 78px; height: 23px; background: #fff; border: 1px solid #d5d8df; justify-content: center; }
.panel h2 { font-size: 14px; line-height: 20px; font-weight: normal; margin: 21px 0 6px; color: #47526c; }
.styles { flex: 1; background: #fff; border: 1px solid #dcdfe6; border-radius: 3px; list-style: none; margin: 0; padding: 2px; color: #000; }
.styles li { height: 34px; padding: 0 5px 0 4px; display: flex; align-items: center; line-height: 24px; width: 220px; }
.styles b { margin-left: 11px; font-family: "Noto Sans", sans-serif; font-size: 19px; }
.styles svg, .styles u { margin-left: auto; margin-bottom: 8px; }
.styles svg { width: 10px; height: 8px; }
.styles u { line-height: 14px; margin-right: 1px; }
.h1 { font-size: 21px; font-weight: bold; }
.h4 { font-size: 19px; font-weight: bold; }
.styles .h4 b { margin-left: 8px; font-size: 18px; }
.char { font-size: 13px; }
.styles .chosen { font-size: 14px; border: 1px solid #4a8be0; padding: 0 4px 0 3px; height: 33px; }
.show-row { display: flex; align-items: center; gap: 6px; margin-top: 6px; }
.show-row .select { flex: 1; }
.preview-row { display: flex; justify-content: space-between; align-items: center; margin-top: 11px; padding-right: 4px; }
.preview-row label, .preview-row a { display: flex; align-items: center; }
.preview-row label { gap: 5px; }
.preview-row a { color: #3879f5; gap: 3px; text-decoration: none; }
.preview-row input { appearance: none; width: 13px; height: 13px; border: 1px solid #222b3d; margin: 0; background: #fff; display: grid; place-items: center; }
.preview-row input:checked::after { content: ""; width: 8px; height: 4px; border: solid #222b3d; border-width: 0 0 1px 1px; transform: rotate(-45deg); margin-bottom: 2px; }

/* Side rail */
.rail { width: 43px; padding-right: 1px; display: flex; flex-direction: column; align-items: center; gap: 4px; padding-top: 11px; color: #3a4560; }
.rail .grip { width: 20px; height: 4px; border: solid #c4c8d0; border-width: 1px 0; margin-bottom: 9px; }
.rail button { width: 32px; height: 32px; justify-content: center; border-radius: 2px; }
.rail svg { width: 16px; height: 16px; }

/* Status bar */
.status { height: 29px; flex: none; border-top: 1px solid #dcdfe6; display: flex; justify-content: space-between; align-items: center; }
.status-left, .status-right, .views { display: flex; align-items: center; }
.status-left { padding: 2px 0 0 10px; }
.status-left > * { padding-right: 5px; margin-right: 4px; border-right: 1px solid #dcdfe6; height: 14px; line-height: 14px; }
.status-left > span:first-child { margin-right: 11px; }
.status-left button { gap: 3px; }
.status-left .proof { margin-left: 4px; padding-right: 10px; }
.status-left .caret { margin-left: 2px; }
.status-right { gap: 8px; padding-right: 16px; }
.views { gap: 3px; margin-right: 7px; }
.views button { width: 23px; height: 24px; justify-content: center; }
.views svg { width: 16px; height: 16px; }
.views .divider { height: 14px; margin: 0 8px; }
.views .divider:last-child { margin-right: 0; }
.percent .caret { margin-left: 5px; }
.minus { margin: 0 4px; }
.zoom { appearance: none; background: none; width: 142px; height: 14px; margin: 0; }
.zoom::-webkit-slider-runnable-track { height: 1px; background: linear-gradient(90deg, #3d4967 30%, #ccd0d8 30%); }
.zoom::-webkit-slider-thumb { appearance: none; width: 12px; height: 12px; border-radius: 50%; border: 1px solid #444; background: #eee; margin-top: -6px; }
.plus { margin-right: 5px; }

/* Overlays */
.activate { position: absolute; left: 1366px; top: 899px; font-size: 19px; line-height: 24px; color: #b4b6ba; white-space: nowrap; }
.activate small { display: block; font-size: 15px; }
.more-dots { position: absolute; right: 14px; bottom: 45px; fill: #222b3d; stroke: none; }
.site-mark { position: absolute; right: 11px; bottom: 8px; display: flex; opacity: 0.85; pointer-events: none; }
.site-mark strong { display: block; font-size: 21px; line-height: 24px; color: #4a8fd6; }
.site-mark em { display: block; font: bold 16px/18px "Liberation Sans", sans-serif; color: #58b878; }
.pointer { position: absolute; z-index: 2; fill: #f00; stroke: none; filter: drop-shadow(2px 3px 2px #0008); pointer-events: none; }
.first { left: 40px; top: 58px; }
.second { left: 291px; top: 260px; }
```
